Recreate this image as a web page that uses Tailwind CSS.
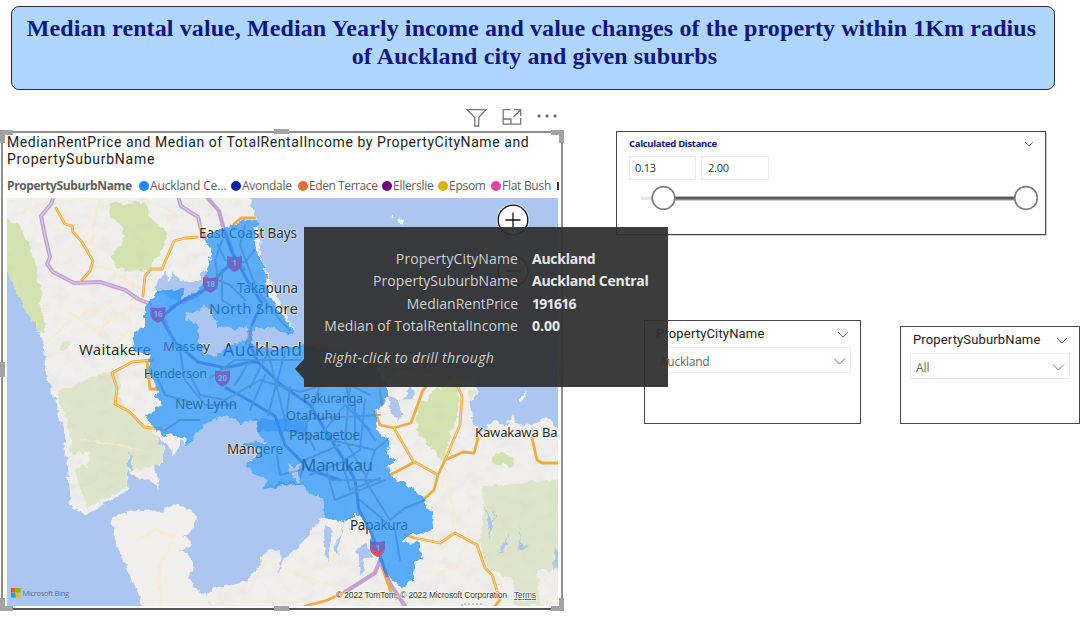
<!DOCTYPE html>
<html lang="en">
<head>
<meta charset="utf-8">
<title>Rental dashboard</title>
<script src="https://cdn.jsdelivr.net/npm/@tailwindcss/browser@4"></script>
</head>
<body class="bg-white">
<div class="relative flex h-[630px] w-[1081px] flex-col overflow-hidden bg-white font-['Open_Sans',sans-serif]">
  <header class="ml-[11px] mt-[6px] h-[84px] w-[1044px] shrink-0 rounded-[8px] border border-[#2d2d2d] bg-[#aed6ff] pt-[7px] text-center font-['Liberation_Serif',serif] text-[24px] leading-[28px] font-bold tracking-[0.1px] whitespace-nowrap text-[#101880]">
    <div class="pr-[3px]">Median rental value, Median Yearly income and value changes of the property within 1Km radius</div>
    <div class="pl-[3px]">of Auckland city and given suburbs</div>
  </header>

  <main class="flex flex-1">
    <section class="flex w-[564px] shrink-0 flex-col">
      <div class="flex h-[41px] items-start gap-[15px] pl-[466px] pt-[17px] text-[#777]">
        <svg class="h-[22px] w-[21px]" viewBox="0 0 21 22" fill="none" stroke="currentColor" stroke-width="1.3"><path d="M1 2.700H20L12.700 10.500V19H8.700V10.500Z"/></svg>
        <svg class="h-[22px] w-[20px]" viewBox="0 0 20 22" fill="none" stroke="currentColor" stroke-width="1.300"><path d="M8.500 2.700H1.200V17.200H18.700V11M1.200 12H9V17.200M11.500 10L18.300 3M12 2.700H18.700V9"/></svg>
        <svg class="h-[22px] w-[20px]" viewBox="0 0 20 22" fill="currentColor"><circle cx="2" cy="9" r="1.700"/><circle cx="10" cy="9" r="1.700"/><circle cx="18" cy="9" r="1.700"/></svg>
      </div>
      <div class="relative ml-[1px] h-[479px] w-[562px] border-2 border-[#8e8e8e] border-b-[#555] bg-white pl-[4px]">
        <h2 class="h-[41px] pt-[1px] font-[Roboto,sans-serif] text-[14px] leading-[17px] tracking-[0.57px] whitespace-nowrap text-[#222]">
          MedianRentPrice and Median of TotalRentalIncome by PropertyCityName and<br><span class="tracking-[0.76px]">PropertySuburbName</span>
        </h2>
        <div class="flex h-[24px] items-center text-[12px] tracking-[-0.28px] whitespace-nowrap text-[#605e5c]">
          <span class="w-[132px] shrink-0 font-bold tracking-[-0.38px]">PropertySuburbName</span>
          <div class="flex w-[92px] shrink-0 items-center gap-[1px]"><i class="size-[10px] shrink-0 rounded-full bg-[#118dff]"></i><span class="tracking-[-0.15px]">Auckland Ce...</span></div>
          <div class="flex w-[67px] shrink-0 items-center gap-[1px]"><i class="size-[10px] shrink-0 rounded-full bg-[#12239e]"></i><span>Avondale</span></div>
          <div class="flex w-[84px] shrink-0 items-center gap-[1px]"><i class="size-[10px] shrink-0 rounded-full bg-[#e66c37]"></i><span class="tracking-[-0.42px]">Eden Terrace</span></div>
          <div class="flex w-[56px] shrink-0 items-center gap-[1px]"><i class="size-[10px] shrink-0 rounded-full bg-[#6b007b]"></i><span>Ellerslie</span></div>
          <div class="flex w-[53px] shrink-0 items-center gap-[1px]"><i class="size-[10px] shrink-0 rounded-full bg-[#d9b300]"></i><span>Epsom</span></div>
          <div class="flex w-[66px] shrink-0 items-center gap-[1px]"><i class="size-[10px] shrink-0 rounded-full bg-[#e044a7]"></i><span>Flat Bush</span></div>
          <i class="h-[8px] w-[2px] shrink-0 bg-[#333]"></i>
        </div>
        <svg class="block h-[408px] w-[551px]" viewBox="7 198 551 408" font-family="'Noto Sans',sans-serif">
          <defs>
            <filter id="coast" filterUnits="userSpaceOnUse" x="0" y="190" width="570" height="425"><feTurbulence type="fractalNoise" baseFrequency="0.13" numOctaves="3" seed="4"/><feDisplacementMap in="SourceGraphic" scale="8" xChannelSelector="R" yChannelSelector="G"/></filter>
            <filter id="relief" x="0" y="0" width="1" height="1"><feTurbulence type="fractalNoise" baseFrequency="0.06 0.1" numOctaves="3" seed="9"/><feColorMatrix values="0 0 0 0 .55  0 0 0 0 .56  0 0 0 0 .5  1.600 0 0 0 -.72"/><feComposite in2="SourceGraphic" operator="in"/></filter>
            <path id="land" d="M0 190H249L251 205L256 217L262 262L295 332L257 328L252 333L251 343L277 350L303 345L340 350L375 365L386 380L400 370L473 380L480 393L470 403L473 423L483 435L487 423L507 423L512 413L515 423L533 427L543 417L565 430V615H218L205 597L213 588L247 582L260 563L268 548L280 549L279 575L283 557L303 543L313 527L320 520L325 517L323 497L313 497L303 487L293 483L263 490L268 480L250 472L248 463L255 456L260 448L243 444L268 443L258 433L255 420L240 422L227 415L207 423L197 433L187 446L180 438L180 448L174 455L168 445L160 440L164 448L163 462L155 467L160 490L150 478L140 480L128 470L127 490L100 507L86 516L71 505L69 470L65 455L64 430L57 410L52 390L45 370L44 345L38 330L20 300L7 270L0 260Z"/>
          </defs>
          <rect x="7" y="198" width="551" height="408" fill="#abc6f1"/>
          <g filter="url(#coast)">
            <use href="#land" fill="#f1efec"/>
            <path d="M112 517L137 509L160 513L172 505L190 508L197 517L195 528L183 535L192 545L182 549L192 560L195 570L188 577L197 590L208 597L212 615H146L137 590L125 565L115 540Z" fill="#f1efec"/>
            <g fill="#d3e3b0">
              <path d="M110 203L147 203L150 217L167 233L163 250L143 273L117 267L110 257L123 243L123 227L112 217ZM0 212L25 233L35 262L38 280L42 295L40 310L45 318L45 332L38 330L20 300L7 270L0 260Z"/>
              <path d="M437 388L457 385L459 410L450 437L443 463L417 430L418 408ZM495 452L513 456L511 467L491 461Z"/>
            </g>
            <g fill="#dde6cb">
              <path d="M95 375L120 370L118 395L132 415L145 428L160 437L164 460L155 467L128 470L125 488L88 508L75 480L68 425L58 400L56 390L75 385Z"/>
              <path d="M483 487L523 483L565 478V570L537 570L540 606H515L512 580L487 567L480 540L484 510ZM57 348L70 340L68 350ZM467 391L480 391L470 401Z"/>
            </g>
            <path d="M67 455L90 452L88 466L75 470L86 512L71 505Z" fill="#eeeeeb"/>
            <use href="#land" filter="url(#relief)" opacity=".22"/>
            <g fill="#abc6f1">
              <path d="M155 287L165 272L170 282L175 272L180 283L200 280L204 270L212 280L200 295L183 303L158 292Z"/>
              <path d="M388 393L397 402L403 413L397 421L391 412ZM403 400L410 386L415 390L410 398ZM128 450L132 460L133 470L128 467ZM157 437L162 440L163 448Z"/>
              <path d="M325 527L333 530L330 545L327 565L324 545ZM345 522L338 545L340 557L334 550ZM355 550L365 543L372 555L360 561ZM361 557L366 570L360 575ZM485 505L491 522L497 508L492 525L490 540ZM519 524L522 545L530 546L520 550ZM508 534L506 548L497 556L503 545ZM555 545L562 565L553 570Z"/>
              <path d="M205 303L200 312L187 313L185 320L195 323L200 343L205 353L218 358L223 348L247 342L251 346L265 340L290 346L303 344V330L290 335L277 331L258 329L252 334L245 327L237 329L218 325L208 310ZM288 462L293 469L303 462L297 473L302 484L290 474Z"/>
            </g>
            <g fill="#f5f4f2"><circle cx="401" cy="221" r="2.500"/><circle cx="392" cy="217" r="1.500"/><path d="M528 392L519 396L519 405L524 398Z"/></g>
            <g fill="none" stroke="#fae9c3" stroke-width="1.300" opacity=".9">
              <path d="M100 198L92 235L97 262L140 290M66 310L95 330L145 300M50 340L70 320L110 305M110 300L100 335M132 285L130 330L115 345M137 540L155 530L175 535L160 565V606M250 590L265 560L300 575L345 590L370 606M320 570L345 545M445 470L455 510L450 540M430 580L460 560L470 530M80 440L120 445L140 450M20 215L45 200M140 198L175 212L165 225"/>
            </g>
          </g>
          <g fill="none" stroke-linejoin="round" stroke-linecap="round">
            <g stroke="#c3a2d3" stroke-width="4">
              <path d="M54 196L51 204L41 216L45 236L50 257L47 264L53 272L74 283L100 282L125 290L138 299L150 304M178 196L181 206L198 217L201 230L205 238M206 196L219 211L224 230L232 250M380 560L375 573L345 592M382 566L391 585L405 606"/>
            </g>
            <path d="M54 196L51 204L41 216L45 236L50 257L47 264L53 272L74 283L100 282L125 290L138 299L150 304M178 196L181 206L198 217L201 230" stroke="#dcc8e6" stroke-width="1.200"/>
            <g stroke="#f2ab42" stroke-width="2.800">
              <path d="M56 208L65 224L72 226L73 232L82 242L93 261L90 271L82 280M197 237L185 238L174 241L162 269L151 269L145 276L143 296M234 224L241 218L255 218M152 360L132 362L112 373L117 388L115 404L130 412L144 427L162 429M147 362L150 389H157M375 412L380 425L394 428L411 423L423 390L426 387M394 428L413 461L422 466L438 475L434 490L424 499M458 387L462 396L460 425L445 460L438 475M390 475L413 463M445 460L463 452L474 453L478 438M532 438L537 460L542 463H558M405 535L415 538L440 543L455 533L477 545L485 568L492 575L500 600L495 606M380 390L382 405M345 592L325 601L305 606M383 570L391 592"/>
            </g>
            <path d="M56 208L65 224L72 226L73 232L82 242L93 261L90 271L82 280M197 237L185 238L174 241L162 269L151 269L145 276L143 296M152 360L132 362L112 373L117 388L115 404L130 412L144 427L162 429M394 428L413 461L422 466L438 475M458 387L462 396L460 425L445 460M415 538L440 543L455 533L477 545L485 568L492 575L500 600" stroke="#fbd48b" stroke-width="1"/>
            <path d="M198 296L188 300L170 307M246 343L251 328" stroke="#e58bb2" stroke-width="2"/>
            <g stroke="#837ab0" stroke-width="3">
              <path d="M224 230L232 252L247 280L262 303L252 325M250 345L258 362L280 384L310 405L330 438L347 465L355 480L359 510L370 530L378 550L387 576M160 316L175 342L198 362L225 368L250 362L258 362M160 318L180 302L205 290L232 262M226 388L245 398L275 416L285 445L310 470L340 480"/>
            </g>
            <g stroke="#b0a88e" stroke-width="2">
              <path d="M218 245L225 260L245 262L255 250M222 270V300L238 310M245 225L240 245L257 290L280 320L290 330M190 375L200 395L225 400L260 380L300 392L340 380L370 395M210 378L235 360L300 360M235 385L250 360M250 388L268 352L285 420L380 415M290 387L285 430L375 450L387 440M320 385L305 430L315 450M350 387L345 440L365 475M340 445L305 460L300 478M325 465L335 500L385 480M343 465L350 490L380 478M330 480H380M375 450L365 480L390 520L405 508L425 500M165 430L180 420L200 420M155 372L165 395L190 402M215 260L218 280L230 285L245 300M370 430L345 405L325 430"/>
            </g>
            <g stroke="#a19dd2" stroke-width="2">
              <path d="M178 350L170 335L165 320M180 350L185 380L205 405L235 405M238 260L245 270M265 375L250 410M285 352L268 415M277 455L280 475L300 470M310 475L340 463L360 450L365 400M222 240L216 258M355 405L355 440M345 380L350 405L375 440M360 500L395 530L400 560"/>
            </g>
          </g>
          <g fill="#2c2c2c" stroke="#fff" stroke-opacity=".5" stroke-width="1.400" paint-order="stroke">
            <text x="199" y="237.500" font-size="13.500" textLength="98">East Coast Bays</text>
            <text x="237" y="292.500" font-size="13.500" textLength="61">Takapuna</text>
            <text x="209" y="314" font-size="15" textLength="89">North Shore</text>
            <text x="79" y="355" font-size="15" textLength="72">Waitakere</text>
            <text x="163" y="350.500" font-size="13" textLength="47">Massey</text>
            <text x="223" y="356" font-size="17.500" textLength="79">Auckland</text>
            <text x="144" y="378" font-size="12.500" textLength="63">Henderson</text>
            <text x="227" y="454" font-size="13.500" textLength="56">Mangere</text>
            <text x="350" y="530" font-size="13.500" textLength="58">Papakura</text>
            <text x="475" y="437" font-size="13" textLength="82.500">Kawakawa Ba</text>
          </g>
          <path filter="url(#coast)" fill="#1890ff" fill-opacity=".7" fill-rule="evenodd" d="M233 225L242 222L253 218L260 223L254 230L256 240L257 250L262 262L267 277L266 283L270 297L277 310L287 320L295 332L290 334L277 330L257 328L252 333L251 343L260 347L277 350L293 347L303 345L340 350L375 365L388 387V397L380 405L375 413L377 430L385 437L390 443L387 455L397 460L388 465L390 475L402 483L412 487L425 500L432 513L433 527L428 533L413 532L405 537L400 542L418 543L423 558L415 563L413 582L400 586L390 578L383 570L380 553L372 542L367 523L357 513L343 522L325 517L323 497L313 497L303 487L293 483L263 490L268 480L250 472L248 463L255 458L260 448L243 445V442L268 444L258 433L255 420L240 422L227 415L207 423L197 433L187 446L185 437L165 435L153 427L145 415L158 408L162 403L155 397L158 390L147 370L152 355L132 350L133 332L145 328V307L157 290L183 288L182 300L200 290L205 277L212 253L205 240L213 233ZM205 303L200 312L187 313L185 320L195 323L200 343L205 353L218 358L223 348L247 342L248 330L245 327L237 329L218 325L208 310ZM288 462L293 469L303 462L297 473L302 484L290 474Z"/>
          <path filter="url(#coast)" fill="#2589f5" fill-opacity=".45" d="M255 418L305 420L308 433L258 431ZM262 488L290 480L303 485L292 484Z"/>
          <g fill="#235f9c" fill-opacity=".85">
            <text x="175" y="408.500" font-size="13.500" textLength="62">New Lynn</text>
            <text x="303" y="403" font-size="12" textLength="60">Pakuranga</text>
            <text x="286" y="419.500" font-size="13" textLength="55">Otahuhu</text>
            <text x="289" y="439.500" font-size="13.500" textLength="71">Papatoetoe</text>
            <text x="301" y="471" font-size="17" textLength="72">Manukau</text>
          </g>
          <g font-size="8" font-weight="bold" text-anchor="middle">
            <g fill="#6d69c3"><path id="shield" d="M227 256Q234.500 258 242 256V263Q242 269 234.500 272Q227 269 227 263Z"/><use href="#shield" x="-24" y="21"/><use href="#shield" x="-76.500" y="51"/><use href="#shield" x="-12" y="114.500"/><use href="#shield" x="143" y="285"/></g>
            <path d="M370 547Q371 554 378 557Q384 554 385 549L380 553L375 551Z" fill="#f9475c"/>
            <path d="M204 277L207 278L204 280Z" fill="#f9475c"/>
            <g fill="#65b2f5"><text x="234.500" y="265.500">1</text><text x="210.500" y="286.500">18</text><text x="158" y="316.500">16</text><text x="222.500" y="380.500">20</text><text x="378" y="551">1</text></g>
          </g>
          <circle cx="513" cy="220" r="16.500" fill="#fff" fill-opacity=".5"/>
          <g stroke="#111" stroke-width="1.300" fill="#fff"><circle cx="513" cy="220" r="14.800"/><circle cx="513" cy="271" r="14.800"/><path d="M505.500 220H520.500M513 212.500V227.500M505.500 271H520.500"/></g>
          <path d="M11 588h4.500v4.500H11z" fill="#f25022"/><path d="M16 588h4.500v4.500H16z" fill="#7fba00"/><path d="M11 593h4.500v4.500H11z" fill="#00a4ef"/><path d="M16 593h4.500v4.500H16z" fill="#ffb900"/>
          <text x="22.500" y="596" font-size="7.500" font-family="'Open Sans',sans-serif" fill="#67707f" textLength="46.500">Microsoft Bing</text>
          <g font-size="8.500" font-family="'Liberation Sans',sans-serif" fill="#333" stroke="#fff" stroke-opacity=".6" stroke-width="1.500" paint-order="stroke"><text x="336" y="598" textLength="171">© 2022 TomTom, © 2022 Microsoft Corporation</text><text x="514" y="598" textLength="22" fill="#2d55a8" text-decoration="underline">Terms</text></g>
          <path d="M462 606V604H482V606" stroke="#999" stroke-dasharray="2 2" fill="none"/>
        </svg>
        <i class="absolute -left-[3px] -top-[3px] size-[13px] border-l-[5px] border-t-[5px] border-[#a3a3a3]"></i>
        <i class="absolute -right-[3px] -top-[3px] size-[13px] border-r-[5px] border-t-[5px] border-[#a3a3a3]"></i>
        <i class="absolute -bottom-[3px] -left-[3px] size-[13px] border-b-[5px] border-l-[5px] border-[#a3a3a3]"></i>
        <i class="absolute -right-[3px] -bottom-[3px] size-[13px] border-r-[5px] border-b-[5px] border-[#a3a3a3]"></i>
        <i class="absolute left-[271px] -top-[4px] h-[5px] w-[15px] bg-[#a3a3a3]"></i>
        <i class="absolute -bottom-[3px] left-[271px] h-[5px] w-[15px] bg-[#a3a3a3]"></i>
        <i class="absolute -left-[3px] top-[229px] h-[15px] w-[5px] bg-[#a3a3a3]"></i>
        <i class="absolute -right-[3px] top-[229px] h-[15px] w-[5px] bg-[#a3a3a3]"></i>
      </div>
    </section>

    <section class="flex flex-col whitespace-nowrap">
      <div class="ml-[52px] mt-[41px] h-[104px] w-[430px] border border-[#484848] pl-[12px] shadow-[1px_1px_0_#ccc]">
        <div class="flex h-[24px] items-center justify-between pr-[11px] text-[9.5px] font-bold tracking-[-0.32px] text-[#12127e]"><span>Calculated Distance</span>
          <svg class="h-[6px] w-[10px]" viewBox="0 0 10 6" fill="none" stroke="#777" stroke-width="1"><path d="M1 1L5 5L9 1"/></svg></div>
        <div class="flex gap-[5px] text-[11px] tracking-[-0.2px] text-[#333]">
          <div class="flex h-[24px] w-[67px] items-center border border-[#ececec] pl-[5px]">0.13</div>
          <div class="flex h-[24px] w-[68px] items-center border border-[#ececec] pl-[6px]">2.00</div>
        </div>
        <svg class="block h-[36px] w-[416px]" viewBox="629 180 416 36"><path d="M641 198.500H652" stroke="#e8e8e8" stroke-width="3"/><path d="M675 198.500H1015" stroke="#999" stroke-width="4"/><path d="M675 198H1015" stroke="#5c5c5c" stroke-width="2.500"/><g fill="#fff" stroke="#7d7d7d" stroke-width="1.700"><circle cx="663.500" cy="198" r="11.300"/><circle cx="1026" cy="198" r="11.300"/></g></svg>
      </div>
      <div class="mt-[85px] flex">
        <div class="ml-[80px] h-[104px] w-[217px] border border-[#484848] pl-[9px]">
          <div class="flex h-[26px] items-center justify-between pr-[11px] pl-[2px] font-[Roboto,sans-serif] text-[13px] tracking-[0.16px] text-[#222]"><span>PropertyCityName</span>
            <svg class="h-[7px] w-[12px]" viewBox="0 0 12 7" fill="none" stroke="#a05a50"><path d="M1 1L6 6L11 1"/></svg></div>
          <div class="flex h-[26px] w-[197px] items-center justify-between border border-[#ececec] pt-[3px] pr-[4px] pl-[5px] text-[12px] tracking-[-0.25px] text-[#666]"><span>Auckland</span>
            <svg class="h-[7px] w-[13px]" viewBox="0 0 13 7" fill="none" stroke="#a05a50"><path d="M1 .5L6.500 6L12 .5"/></svg></div>
        </div>
        <div class="ml-[39px] mt-[6px] h-[98px] w-[180px] border border-[#484848] pl-[9px]">
          <div class="flex h-[26px] items-center justify-between pr-[11px] pl-[3px] font-[Roboto,sans-serif] text-[13px] tracking-[0.14px] text-[#222]"><span>PropertySuburbName</span>
            <svg class="h-[7px] w-[12px]" viewBox="0 0 12 7" fill="none" stroke="#557080"><path d="M1 1L6 6L11 1"/></svg></div>
          <div class="flex h-[26px] w-[160px] items-center justify-between border border-[#ececec] pt-[3px] pr-[4px] pl-[5px] text-[12px] text-[#666]"><span>All</span>
            <svg class="h-[7px] w-[13px]" viewBox="0 0 13 7" fill="none" stroke="#777"><path d="M1 .5L6.500 6L12 .5"/></svg></div>
        </div>
      </div>
    </section>
  </main>

  <div class="absolute left-[304px] top-[227px] h-[160px] w-[364px] bg-[#303030]/94 pl-[20px] pt-[21px] text-[14px] whitespace-nowrap text-[#d0d0d0]">
    <svg class="absolute -left-[9px] top-[132px] h-[20px] w-[9px]" viewBox="0 0 9 20"><path d="M9 0V20L0 10Z" fill="#303030" fill-opacity=".94"/></svg>
    <div class="grid grid-cols-[194px_1fr] gap-x-[14px] leading-[22.400px]">
      <div class="text-right tracking-[0.12px]">PropertyCityName</div><div class="font-bold tracking-[-0.26px] text-[#e8e8e8]">Auckland</div>
      <div class="text-right tracking-[0.08px]">PropertySuburbName</div><div class="font-bold tracking-[-0.26px] text-[#e8e8e8]">Auckland Central</div>
      <div class="text-right">MedianRentPrice</div><div class="font-bold tracking-[-0.7px] text-[#e8e8e8]">191616</div>
      <div class="text-right tracking-[0.08px]">Median of TotalRentalIncome</div><div class="font-bold text-[#e8e8e8]">0.00</div>
    </div>
    <div class="mt-[9px] leading-[22px] tracking-[0.38px] italic">Right-click to drill through</div>
  </div>
</div>
</body>
</html>
